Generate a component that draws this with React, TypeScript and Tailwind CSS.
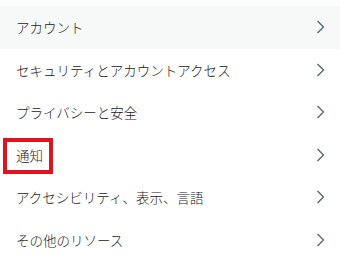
const items = [
  'アカウント',
  'セキュリティとアカウントアクセス',
  'プライバシーと安全',
  '通知',
  'アクセシビリティ、表示、言語',
  'その他のリソース',
];

function Chevron() {
  return (
    <svg width="20" height="20" viewBox="0 0 20 20" className="text-[#536471]">
      <path d="M7.5 4 L13.5 10 L7.5 16" fill="none" stroke="currentColor" strokeWidth="1.3" />
    </svg>
  );
}

export default function App() {
  return (
    <div
      className="h-[275px] w-[340px] bg-white pt-[6px]"
      style={{ fontFamily: '"Noto Sans CJK JP", "Noto Sans", sans-serif' }}
    >
      {items.map((label, i) => (
        <div
          key={label}
          className={`relative flex h-[42.5px] items-center justify-between pl-4 pr-[10px] ${
            i === 0 ? 'bg-[#f7f9f9]' : ''
          }`}
        >
          <span className="text-[13.5px] font-light text-[#222]">{label}</span>
          <Chevron />
          {label === '通知' && (
            <div className="absolute left-[3px] top-[4px] h-[36px] w-[50px] border-4 border-[#e0141e]" />
          )}
        </div>
      ))}
    </div>
  );
}
